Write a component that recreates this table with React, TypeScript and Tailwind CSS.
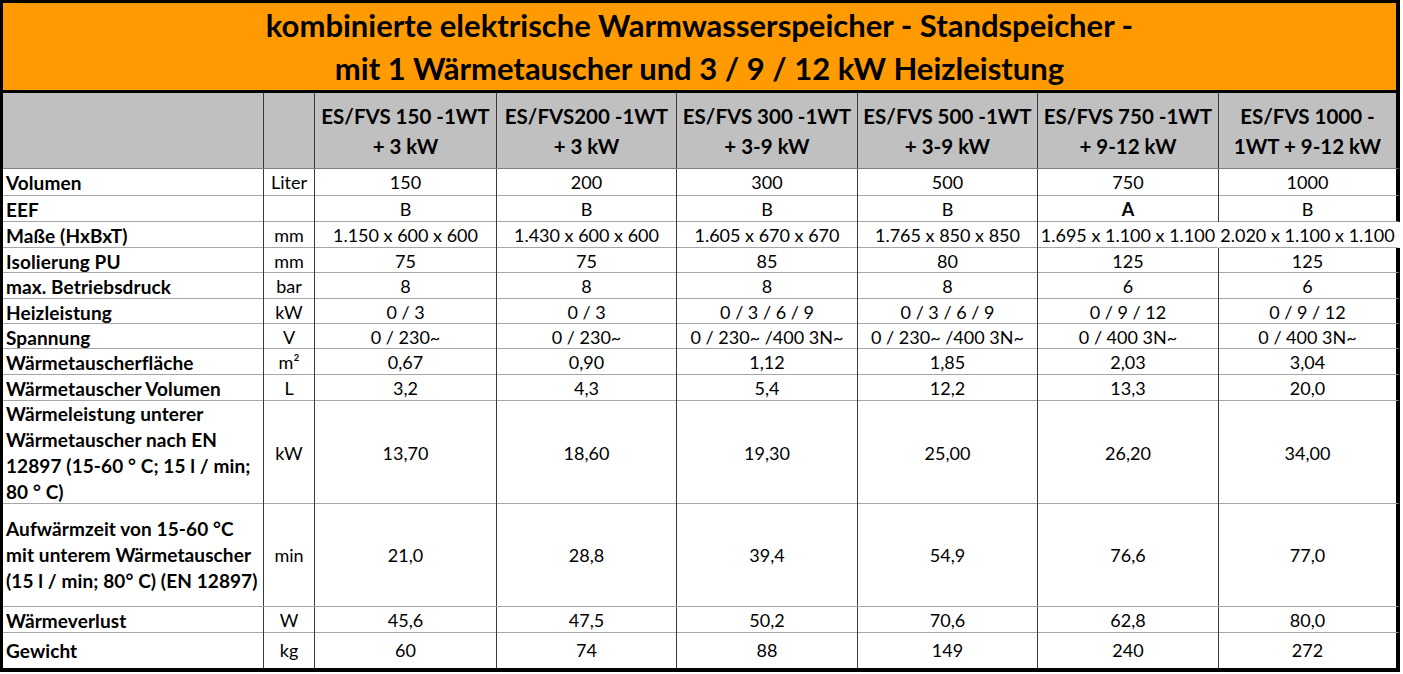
import React from "react"

type Cell = string | { text: string; bold?: boolean }

interface Row {
  label: string[]
  unit: string
  values: Cell[]
  h: string
}

const grid = "grid grid-cols-[261px_51px_182px_180px_181px_180px_181px_177px]"

const models = [
  ["ES/FVS 150 -1WT", "+ 3 kW"],
  ["ES/FVS200 -1WT", "+ 3 kW"],
  ["ES/FVS 300 -1WT", "+ 3-9 kW"],
  ["ES/FVS 500 -1WT", "+ 3-9 kW"],
  ["ES/FVS 750 -1WT", "+ 9-12 kW"],
  ["ES/FVS 1000 -", "1WT + 9-12 kW"],
]

const rows: Row[] = [
  { label: ["Volumen"], unit: "Liter", values: ["150", "200", "300", "500", "750", "1000"], h: "h-[27px]" },
  { label: ["EEF"], unit: "", values: ["B", "B", "B", "B", { text: "A", bold: true }, "B"], h: "h-[26px]" },
  {
    label: ["Maße (HxBxT)"],
    unit: "mm",
    values: ["1.150 x 600 x 600", "1.430 x 600 x 600", "1.605 x 670 x 670", "1.765 x 850 x 850", "1.695 x 1.100 x 1.100", "2.020 x 1.100 x 1.100"],
    h: "h-[26px]",
  },
  { label: ["Isolierung PU"], unit: "mm", values: ["75", "75", "85", "80", "125", "125"], h: "h-[25px]" },
  { label: ["max. Betriebsdruck"], unit: "bar", values: ["8", "8", "8", "8", "6", "6"], h: "h-[26px]" },
  { label: ["Heizleistung"], unit: "kW", values: ["0 / 3", "0 / 3", "0 / 3 / 6 / 9", "0 / 3 / 6 / 9", "0 / 9 / 12", "0 / 9 / 12"], h: "h-[25px]" },
  {
    label: ["Spannung"],
    unit: "V",
    values: ["0 / 230~", "0 / 230~", "0 / 230~ /400 3N~", "0 / 230~ /400 3N~", "0 / 400 3N~", "0 / 400 3N~"],
    h: "h-[25px]",
  },
  { label: ["Wärmetauscherfläche"], unit: "m²", values: ["0,67", "0,90", "1,12", "1,85", "2,03", "3,04"], h: "h-[26px]" },
  { label: ["Wärmetauscher Volumen"], unit: "L", values: ["3,2", "4,3", "5,4", "12,2", "13,3", "20,0"], h: "h-[26px]" },
  {
    label: ["Wärmeleistung unterer", "Wärmetauscher nach EN", "12897 (15-60 ° C; 15 l / min;", "80 ° C)"],
    unit: "kW",
    values: ["13,70", "18,60", "19,30", "25,00", "26,20", "34,00"],
    h: "h-[103px]",
  },
  {
    label: ["Aufwärmzeit von 15-60 °C", "mit unterem Wärmetauscher", "(15 l / min; 80° C) (EN 12897)"],
    unit: "min",
    values: ["21,0", "28,8", "39,4", "54,9", "76,6", "77,0"],
    h: "h-[103px]",
  },
  { label: ["Wärmeverlust"], unit: "W", values: ["45,6", "47,5", "50,2", "70,6", "62,8", "80,0"], h: "h-[26px]" },
  { label: ["Gewicht"], unit: "kg", values: ["60", "74", "88", "149", "240", "272"], h: "h-[35px]" },
]

export default function App() {
  return (
    <div className="w-[1403px] h-[674px] bg-white font-['Lato',sans-serif] text-black">
      <div className="w-[1400px] border-t-[3px] border-l-[3px] border-b-[4px] border-black">
        {/* title */}
        <div className="h-[90px] bg-[#ff9a00] border-b-[3px] border-r-[4px] border-black flex flex-col items-center justify-center">
          <div className="text-[31px] font-bold leading-[43px] text-center whitespace-nowrap">
            kombinierte elektrische Warmwasserspeicher - Standspeicher -
            <br />
            mit 1 Wärmetauscher und 3 / 9 / 12 kW Heizleistung
          </div>
        </div>

        {/* model header */}
        <div className={`${grid} h-[76px] bg-[#c0c0c0] border-b border-b-[#7f7f7f] border-r-[4px] border-r-black`}>
          <div className="border-r border-[#3a3a3a]" />
          <div className="border-r border-[#3a3a3a]" />
          {models.map((m, i) => (
            <div
              key={i}
              className={`flex flex-col items-center justify-center text-[20.5px] font-bold leading-[30px] whitespace-nowrap ${
                i < models.length - 1 ? "border-r border-[#3a3a3a]" : ""
              }`}
            >
              <span>{m[0]}</span>
              <span>{m[1]}</span>
            </div>
          ))}
        </div>

        {rows.map((r, ri) => {
          const last = ri === rows.length - 1
          const overflow = r.label[0] === "Maße (HxBxT)"
          return (
            <div
              key={ri}
              className={`${grid} ${r.h} bg-white text-[18px] border-r-[4px] ${overflow ? "border-r-white" : "border-r-black"} ${
                last ? "" : "border-b border-b-[#a6a6a6]"
              }`}
            >
              <div className="border-r border-[#3a3a3a] pl-[3px] flex flex-col justify-center font-bold text-[19px] tracking-[0.1px] leading-[26px]">
                {r.label.map((l, li) => (
                  <span key={li} className="whitespace-nowrap">
                    {l}
                  </span>
                ))}
              </div>
              <div className="border-r border-[#3a3a3a] flex items-center justify-center">{r.unit}</div>
              {r.values.map((v, vi) => {
                const cell = typeof v === "string" ? { text: v } : v
                const isLast = vi === r.values.length - 1
                const hideLine = overflow && vi === 4
                return (
                  <div
                    key={vi}
                    className={`flex items-center justify-center whitespace-nowrap ${cell.bold ? "font-bold" : ""} ${
                      isLast ? "" : hideLine ? "border-r border-white" : "border-r border-[#3a3a3a]"
                    }`}
                  >
                    {cell.text}
                  </div>
                )
              })}
            </div>
          )
        })}
      </div>
    </div>
  )
}
